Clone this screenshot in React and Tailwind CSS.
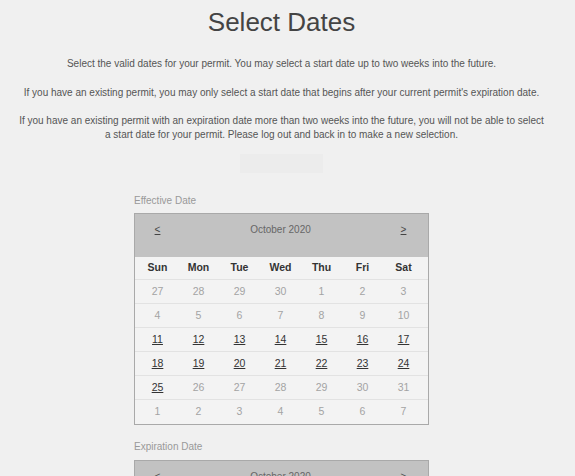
import React from "react";

const weeks = [
  [[27,0],[28,0],[29,0],[30,0],[1,0],[2,0],[3,0]],
  [[4,0],[5,0],[6,0],[7,0],[8,0],[9,0],[10,0]],
  [[11,1],[12,1],[13,1],[14,1],[15,1],[16,1],[17,1]],
  [[18,1],[19,1],[20,1],[21,1],[22,1],[23,1],[24,1]],
  [[25,1],[26,0],[27,0],[28,0],[29,0],[30,0],[31,0]],
  [[1,0],[2,0],[3,0],[4,0],[5,0],[6,0],[7,0]],
];
const days = ["Sun", "Mon", "Tue", "Wed", "Thu", "Fri", "Sat"];

function Calendar() {
  return (
    <div className="w-[295px] border border-[#a9a9a9] bg-[#f3f3f3]">
      <div className="h-[43px] bg-[#c2c2c2] grid grid-cols-7 pl-[2px] pr-[4px] pt-[8px] text-[10px] leading-[16px] text-[#666]">
        <div className="text-center"><span className="underline text-[#444]">&lt;</span></div>
        <div className="col-span-5 text-center">October 2020</div>
        <div className="text-center"><span className="underline text-[#444]">&gt;</span></div>
      </div>
      <div className="grid grid-cols-7 pl-[2px] pr-[4px] h-[23px] items-center border-b border-[#e2e2e2] text-[10.5px] font-bold text-[#333]">
        {days.map((d) => (
          <div key={d} className="text-center">{d}</div>
        ))}
      </div>
      {weeks.map((w, i) => (
        <div
          key={i}
          className={
            "grid grid-cols-7 pl-[2px] pr-[4px] h-[24px] items-center text-[10.5px] " +
            (i < 5 ? "border-b border-[#e2e2e2]" : "")
          }
        >
          {w.map(([n, a], j) => (
            <div key={j} className="text-center">
              {a ? (
                <span className="underline text-[#333]">{n}</span>
              ) : (
                <span className="text-[#a3a3a3]">{n}</span>
              )}
            </div>
          ))}
        </div>
      ))}
    </div>
  );
}

export default function App() {
  return (
    <div
      className="h-[476px] bg-[#f0f0f0] overflow-hidden"
      style={{ fontFamily: '"Liberation Sans", Arial, sans-serif' }}
    >
      <div className="w-[563px]">
        <h1 className="pt-[7px] text-center text-[26px] leading-[30px] text-[#444]">Select Dates</h1>
        <div className="px-[17px] text-center text-[10px] leading-[14px] text-[#555]">
          <p className="mt-[20px]">
            Select the valid dates for your permit. You may select a start date up to two weeks into the future.
          </p>
          <p className="mt-[15px]">
            If you have an existing permit, you may only select a start date that begins after your current permit's expiration date.
          </p>
          <p className="mt-[14px]">
            If you have an existing permit with an expiration date more than two weeks into the future, you will not be able to select a start date for your permit. Please log out and back in to make a new selection.
          </p>
        </div>
        <div className="flex justify-center mt-[12px]">
          <div className="w-[83px] h-[19px] bg-[#ececec]"></div>
        </div>
        <div className="w-[295px] mx-auto">
          <div className="mt-[21px] text-[10px] leading-[14px] text-[#999]">Effective Date</div>
          <div className="mt-[5px]">
            <Calendar />
          </div>
          <div className="mt-[15px] text-[10px] leading-[14px] text-[#999]">Expiration Date</div>
          <div className="mt-[6px]">
            <Calendar />
          </div>
        </div>
      </div>
    </div>
  );
}
